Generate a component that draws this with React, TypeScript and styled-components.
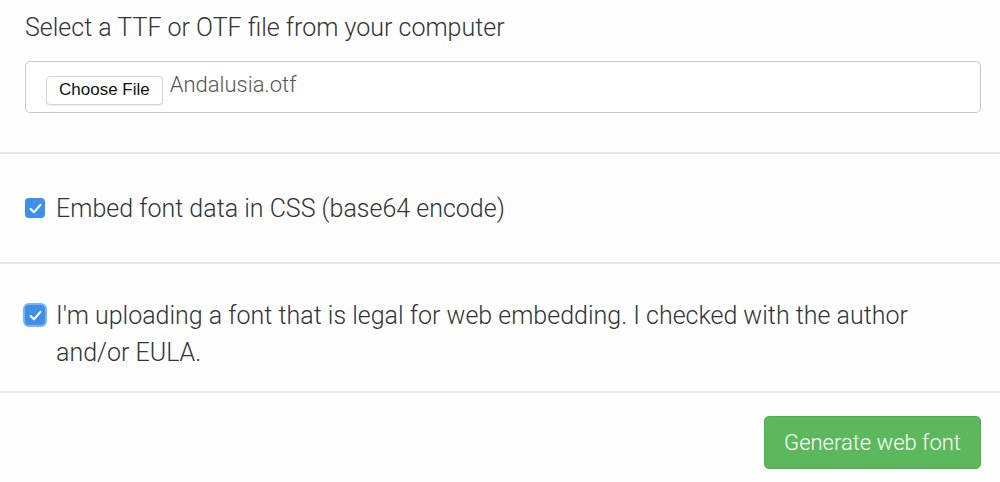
import * as React from 'react'
import styled, { createGlobalStyle } from 'styled-components'

const Global = createGlobalStyle`
  html, body {
    margin: 0;
    padding: 0;
    background: #fefefe;
  }
  body {
    font-family: Roboto, "Noto Sans", sans-serif;
    font-weight: 300;
    color: #333;
  }
`

const Form = styled.form`
  width: 1000px;
  height: 482px;
  overflow: hidden;
  display: flex;
  flex-direction: column;
`

const Section = styled.div<{ $pad: string }>`
  padding: ${p => p.$pad};
  border-bottom: 2px solid #e6e6e6;
`

const Label = styled.div`
  font-size: 25px;
  line-height: 30px;
  margin-bottom: 18px;
`

const FileBox = styled.div`
  display: flex;
  align-items: center;
  gap: 7px;
  height: 50px;
  padding: 0 20px;
  border: 1px solid #c8c8c8;
  border-radius: 5px;
  background: #fff;
`

const ChooseButton = styled.span`
  font-family: "Liberation Sans", Arial, sans-serif;
  font-weight: 400;
  font-size: 17px;
  color: #111;
  padding: 3px 12px 4px;
  border: 1px solid #d4d4d4;
  border-radius: 4px;
  background: #fff;
  box-shadow: 0 1px 1px rgba(0, 0, 0, 0.08);
  margin-top: 6px;
`

const FileName = styled.span`
  font-size: 22px;
  color: #555;
  margin-top: -6px;
`

const CheckRow = styled.label`
  display: flex;
  align-items: flex-start;
  gap: 11px;
  font-size: 25px;
  line-height: 37px;
`

const Box = styled.span<{ $focus?: boolean }>`
  flex: none;
  width: 20px;
  height: 20px;
  margin-top: 8px;
  border-radius: 4px;
  background: #3d8fe8;
  display: flex;
  align-items: center;
  justify-content: center;
  box-shadow: ${p => (p.$focus ? '0 0 0 2px #7cb4f2' : 'none')};
`

const Footer = styled.div`
  display: flex;
  justify-content: flex-end;
  padding: 23px 19px 0;
`

const GenerateButton = styled.button`
  font-family: Roboto, "Noto Sans", sans-serif;
  font-weight: 300;
  font-size: 22px;
  color: #fff;
  background: #5cb85c;
  border: 1px solid #4cae4c;
  border-radius: 5px;
  width: 217px;
  height: 53px;
  cursor: pointer;
`

const Check = () => (
  <svg width="15" height="15" viewBox="0 0 14 14">
    <path d="M2.5 7.5 L5.6 10.6 L11.5 3.6" fill="none" stroke="#fff" strokeWidth="2" strokeLinecap="round" strokeLinejoin="round" />
  </svg>
)

export default function App() {
  return (
    <>
      <Global />
      <Form onSubmit={e => e.preventDefault()}>
        <Section $pad="13px 19px 39px 25px">
          <Label>Select a TTF or OTF file from your computer</Label>
          <FileBox>
            <ChooseButton>Choose File</ChooseButton>
            <FileName>Andalusia.otf</FileName>
          </FileBox>
        </Section>
        <Section $pad="36px 25px 35px">
          <CheckRow>
            <Box><Check /></Box>
            Embed font data in CSS (base64 encode)
          </CheckRow>
        </Section>
        <Section $pad="33px 60px 20px 25px">
          <CheckRow>
            <Box $focus><Check /></Box>
            <span>I'm uploading a font that is legal for web embedding. I checked with the author and/or EULA.</span>
          </CheckRow>
        </Section>
        <Footer>
          <GenerateButton type="submit">Generate web font</GenerateButton>
        </Footer>
      </Form>
    </>
  )
}
